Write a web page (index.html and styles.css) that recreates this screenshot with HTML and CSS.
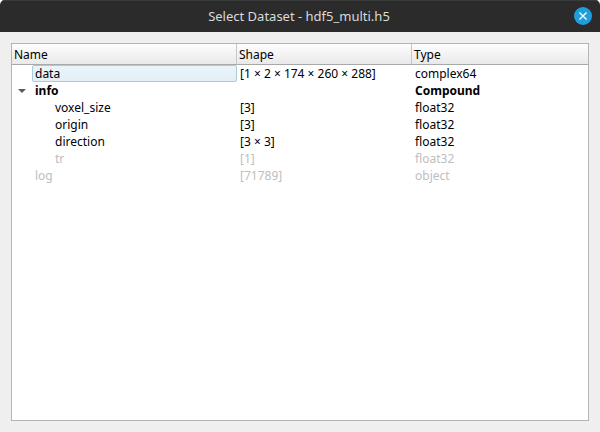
FILE: index.html
```html
<!DOCTYPE html>
<html lang="en">
<head>
<meta charset="utf-8">
<title>Select Dataset - hdf5_multi.h5</title>
<link rel="stylesheet" href="styles.css">
</head>
<body>
<div class="window">
  <header class="titlebar">
    <h1 class="title">Select Dataset - hdf5_multi.h5</h1>
    <button class="close" aria-label="Close"><svg width="18" height="18" viewBox="0 0 18 18"><circle cx="9" cy="9" r="9" fill="#1f9ede"/><path d="M5.5 5.5l7 7M12.5 5.5l-7 7" stroke="#fff" stroke-width="1.3" fill="none"/></svg></button>
  </header>
  <main class="tree">
    <div class="row head"><span>Name</span><span>Shape</span><span>Type</span></div>
    <div class="row"><span class="name selected">data</span><span>[1 × 2 × 174 × 260 × 288]</span><span>complex64</span></div>
    <div class="row bold"><span class="name"><svg class="arrow" width="8" height="4" viewBox="0 0 8 4"><path d="M0 0h8L4 4z" fill="#5a5a5a"/></svg>info</span><span></span><span>Compound</span></div>
    <div class="row child"><span class="name">voxel_size</span><span>[3]</span><span>float32</span></div>
    <div class="row child"><span class="name">origin</span><span>[3]</span><span>float32</span></div>
    <div class="row child"><span class="name">direction</span><span>[3 × 3]</span><span>float32</span></div>
    <div class="row child disabled"><span class="name">tr</span><span>[1]</span><span>float32</span></div>
    <div class="row disabled"><span class="name">log</span><span>[71789]</span><span>object</span></div>
  </main>
</div>
</body>
</html>
```
FILE: styles.css
```css
* { box-sizing: border-box; }
body { margin: 0; background: #fff; }
.window {
  width: 600px;
  height: 432px;
  display: flex;
  flex-direction: column;
  background: #efefef;
  border-radius: 5px 5px 0 0;
  overflow: hidden;
  font: 12px/17px "Noto Sans", sans-serif;
  color: #000;
}
.titlebar {
  height: 32px;
  display: grid;
  grid-template-columns: 32px 1fr 34px;
  align-items: center;
  background: #2b2b2b;
  box-shadow: inset 0 1px #3a3a3a;
}
.title {
  grid-column: 2;
  margin: 0;
  text-align: center;
  font-size: 13px;
  font-weight: 400;
  color: #dadada;
}
.close {
  width: 18px;
  height: 18px;
  margin-left: 8px;
  padding: 0;
  border: 0;
  background: none;
}
.close svg { display: block; }
.tree {
  flex: 1;
  margin: 11px;
  border: 1px solid #b4b4b4;
  background: #fff;
}
.row {
  display: grid;
  grid-template-columns: 225px 175px 1fr;
  grid-template-rows: 100%;
  height: 17px;
}
.row > span { padding-left: 3px; white-space: nowrap; }
.head {
  height: 21px;
  line-height: 21px;
  background: linear-gradient(#fdfdfd, #e9e9e9);
  border-bottom: 1px solid #a9a9a9;
}
.head > span { border-right: 1px solid #c6c6c6; padding-left: 2px; }
.head > span:last-child { border-right: 0; }
.row > .name { margin-left: 20px; display: flex; align-items: center; }
.child > .name { margin-left: 40px; }
.selected {
  border: 1px solid #a9cbdc;
  border-radius: 2px;
  background: linear-gradient(#eaf4fa, #e2eef5);
  line-height: 15px;
}
.row > .selected { padding-left: 2px; }
.child > .name { margin-left: 40px; }
.row.child > .name { margin-left: 40px; }
.arrow { margin-left: -17px; margin-right: 9px; }
.bold { font-weight: 700; }
.disabled { color: #bebebe; }
```
